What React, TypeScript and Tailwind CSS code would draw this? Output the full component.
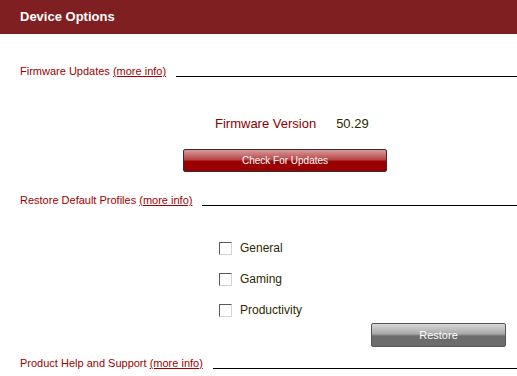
import React from "react";

function SectionRow({ label }: { label: string }) {
  return (
    <div className="flex items-end h-[14px] pl-[20px]">
      <span className="text-[11px] leading-[14px] text-[#a00000] whitespace-nowrap">
        {label} <span className="underline">(more info)</span>
      </span>
      <div className="flex-1 ml-[10px] mb-[1px] border-b border-black" />
    </div>
  );
}

function Check({ label }: { label: string }) {
  return (
    <div className="flex items-center h-[16px] pl-[219px]">
      <div className="w-[13px] h-[13px] bg-white border border-t-[#5a5a5a] border-l-[#5a5a5a] border-b-[#d4d4d4] border-r-[#d4d4d4]" />
      <span className="ml-[8px] text-[12px] leading-[16px] text-[#2e2a00]">{label}</span>
    </div>
  );
}

export default function App() {
  return (
    <div
      className="w-[517px] h-[376px] bg-white overflow-hidden"
      style={{ fontFamily: '"Liberation Sans", Arial, sans-serif' }}
    >
      <div className="h-[34px] bg-[#7f1f22] flex items-center pl-[20px]">
        <span className="text-white font-bold text-[13px]">Device Options</span>
      </div>

      <div className="mt-[30px]">
        <SectionRow label="Firmware Updates" />
      </div>

      <div className="mt-[38px] flex items-center h-[16px] pl-[215px]">
        <span className="text-[13px] leading-[16px] text-[#8b0000]">Firmware Version</span>
        <span className="ml-[20px] text-[13px] leading-[16px] text-[#2e2a00]">50.29</span>
      </div>

      <div className="mt-[17px] pl-[183px]">
        <button className="w-[204px] h-[23px] rounded-[2px] border border-[#3a2a2a] bg-[linear-gradient(to_bottom,#d89a9a_0%,#b84848_45%,#9a0000_55%,#9a0000_100%)] text-white text-[10px] flex items-center justify-center">
          Check For Updates
        </button>
      </div>

      <div className="mt-[21px]">
        <SectionRow label="Restore Default Profiles" />
      </div>

      <div className="mt-[33px] flex flex-col gap-[15px]">
        <Check label="General" />
        <Check label="Gaming" />
        <Check label="Productivity" />
      </div>

      <div className="mt-[5px] pl-[371px]">
        <button className="w-[135px] h-[24px] rounded-[2px] border border-[#555] bg-[linear-gradient(to_bottom,#d8d8d8_0%,#a8a8a8_45%,#6c6c6c_55%,#6c6c6c_100%)] text-white text-[11px] flex items-center justify-center">
          Restore
        </button>
      </div>

      <div className="mt-[9px]">
        <SectionRow label="Product Help and Support" />
      </div>
    </div>
  );
}
